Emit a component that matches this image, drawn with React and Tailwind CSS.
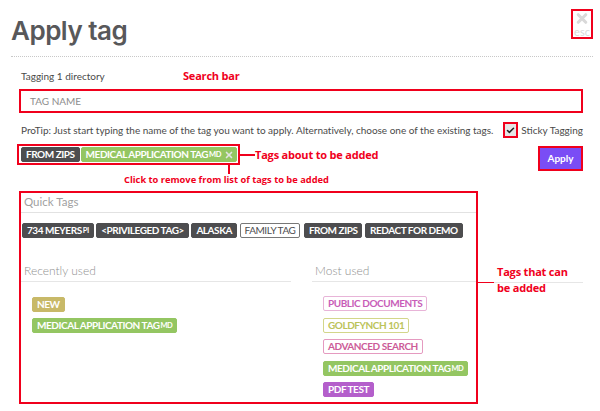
import { Check, X } from 'lucide-react';

const dark = 'bg-[#4d4d4f] text-white border-[#4d4d4f]';
const green = 'bg-[#94c662] text-white border-[#94c662]';

function Tag({ children, className, sub }) {
  return (
    <span className={`inline-flex items-center h-[15px] px-1 rounded-[2px] border text-[10px] font-bold tracking-[-0.45px] whitespace-nowrap ${className}`}>
      {children}
      {sub && <span className="ml-[1px] text-[7.5px] mt-[1px]">{sub}</span>}
    </span>
  );
}

function Note({ className, children }) {
  return <span className={`absolute font-['Open_Sans',sans-serif] font-bold text-[11px] tracking-[-0.2px] text-[#f0001c] whitespace-nowrap ${className}`}>{children}</span>;
}

export default function App() {
  return (
    <div className="relative w-[600px] h-[411px] overflow-hidden bg-white font-['Lato',sans-serif] text-[#4a4a4a]">
      {/* Header */}
      <header className="mx-[11px] mr-[7px] h-[57px] flex justify-between border-b border-dotted border-[#c8c8c8]">
        <h1 className="mt-[13px] h-[36px] font-['Inter',sans-serif] font-semibold text-[26px] leading-[36px] tracking-[-0.5px] text-[#58585a]">Apply tag</h1>
        <button className="mt-[9px] w-[22px] h-[30px] border-2 border-[#f0001c] flex flex-col items-center text-[#d9d9d9] leading-none">
          <X size={16} strokeWidth={5} />
          <span className="text-[11px] leading-[11px]">esc</span>
        </button>
      </header>

      <main className="pl-[19px] pr-[17px]">
        <p className="pl-[2px] mt-[12px] h-[14px] text-[10px] leading-[14px]">Tagging 1 directory</p>

        <div className="mt-[6px] h-[24px] border-2 border-[#f0001c] pl-[9px] flex items-center text-[10px] text-[#8c8c8c]">TAG NAME</div>

        <div className="mt-[9px] h-[16px] flex items-center justify-between pl-[2px] text-[10px] whitespace-nowrap">
          <p className="tracking-[-0.02px]">ProTip: Just start typing the name of the tag you want to apply. Alternatively, choose one of the existing tags.</p>
          <label className="flex items-center gap-[3px]">
            <span className="w-[15px] h-[16px] border-2 border-[#f0001c] bg-[#e6e6e6] flex items-center justify-center text-[#222]">
              <Check size={9} strokeWidth={4} />
            </span>
            Sticky Tagging
          </label>
        </div>

        <div className="mt-[6px] flex justify-between items-start">
          <div className="-ml-[2px] w-[223px] h-[21px] border-2 border-[#f0001c] pl-[2px] flex items-center gap-[1px]">
            <Tag className={dark}>FROM ZIPS</Tag>
            <Tag className={`${green} !pr-[2px]`} sub="MD">
              MEDICAL APPLICATION TAG<X size={10} strokeWidth={4} className="ml-[3px] text-[#e3e3e3] order-last" />
            </Tag>
          </div>
          <button className="mt-[2px] w-[45px] h-[25px] border-2 border-[#f0001c] bg-[#7a4df5] text-white text-[10px] font-bold">Apply</button>
        </div>

        {/* Quick tags */}
        <section className="mt-[20px] w-[459px] h-[213px] border-2 border-[#f0001c]">
          <h2 className="pl-[3px] pt-[1px] h-[20px] text-[11.5px] leading-[15px] text-[#9f9f9f] border-b border-[#e2e2e2]">Quick Tags</h2>
          <div className="mt-[10px] pl-[1px] flex gap-[2.5px]">
            <Tag className={dark} sub="PI">734 MEYERS</Tag>
            <Tag className={dark}>{'<PRIVILEGED TAG>'}</Tag>
            <Tag className={dark}>ALASKA</Tag>
            <Tag className="bg-white border-[#777] text-[#4d4d4f] font-normal">FAMILY TAG</Tag>
            <Tag className={`${dark} ml-[1px]`}>FROM ZIPS</Tag>
            <Tag className={dark}>REDACT FOR DEMO</Tag>
          </div>

          <div className="mt-[25px] flex">
            <div className="w-[291px]">
              <h3 className="pl-[3px] h-[19px] w-[270px] text-[12px] leading-[15px] font-light text-[#8f8f8f] border-b border-[#e6e6e6]">Recently used</h3>
              <div className="pt-[15px] pl-[11px] flex flex-col items-start gap-[6px]">
                <Tag className="bg-[#c8b968] text-white border-[#c8b968]">NEW</Tag>
                <Tag className={green} sub="MD">MEDICAL APPLICATION TAG</Tag>
              </div>
            </div>
            <div className="flex-1">
              <h3 className="pl-[3px] h-[19px] text-[12px] leading-[15px] font-light text-[#8f8f8f] border-b border-[#e6e6e6]">Most used</h3>
              <div className="pt-[14px] pl-[11px] flex flex-col items-start gap-[6.5px]">
                <Tag className="bg-white border-[#e8b4d8] text-[#c85db8]">PUBLIC DOCUMENTS</Tag>
                <Tag className="bg-white border-[#d3d68a] text-[#bcc35a]">GOLDFYNCH 101</Tag>
                <Tag className="bg-white border-[#e59ac0] text-[#cc5c98]">ADVANCED SEARCH</Tag>
                <Tag className={green} sub="MD">MEDICAL APPLICATION TAG</Tag>
                <Tag className="bg-[#b45fcb] text-white border-[#b45fcb]">PDF TEST</Tag>
              </div>
            </div>
          </div>
        </section>
      </main>

      {/* Annotations drawn on top of the screenshot */}
      <Note className="left-[183px] top-[68px] leading-[16px]">Search bar</Note>
      <span className="absolute left-[240px] top-[154px] w-[15px] h-[2px] bg-[#f0001c]" />
      <Note className="left-[255px] top-[147px] leading-[16px]">Tags about to be added</Note>
      <span className="absolute left-[228px] top-[165px] w-[2px] h-[9px] bg-[#f0001c]" />
      <Note className="left-[124px] top-[173px] !text-[9.3px] !tracking-normal leading-[13px]">Click to remove from list of tags to be added</Note>
      <span className="absolute left-[477px] top-[282px] w-[17px] h-[1px] bg-[#f0001c]" />
      <span className="absolute left-[494px] top-[282px] w-[89px] h-[1px] bg-[#e6e6e6]" />
      <Note className="left-[497px] top-[264px] leading-[16px]">Tags that can<br />be added</Note>
    </div>
  );
}
